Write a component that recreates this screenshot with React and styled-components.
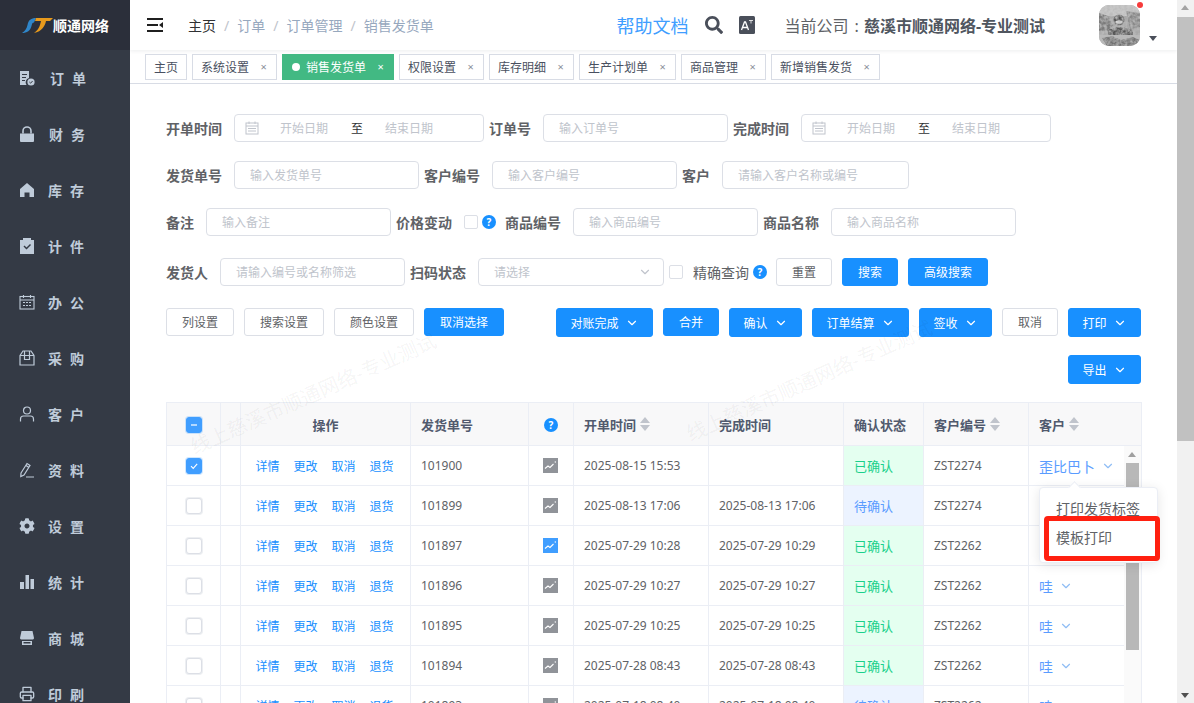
import React from "react";
import styled, { createGlobalStyle } from "styled-components";
import { FaCog, FaSearch } from "react-icons/fa";
import { FiPrinter, FiChevronDown } from "react-icons/fi";

const GlobalStyle = createGlobalStyle`
  html, body { margin: 0; padding: 0; height: 100%; overflow: hidden; }
  body { font-family: "Noto Sans", "Noto Sans CJK SC", sans-serif; color: #606266; background: #fff; }
  * { box-sizing: border-box; }
`;

const Page = styled.div`
  display: grid;
  grid-template-columns: 130px 1047px 17px;
  width: 1194px;
  height: 703px;
  overflow: hidden;
`;

// sidebar
const Sidebar = styled.aside`
  background: #343a45;
  height: 703px;
  overflow: hidden;
`;
const Logo = styled.div`
  display: flex;
  align-items: center;
  height: 50px;
  padding-left: 22px;
  background: #2b2f3a;
  color: #fff;
  font-size: 14px;
  font-weight: 700;
`;
const MenuItem = styled.div`
  display: flex;
  align-items: center;
  height: 56px;
  padding-left: 19px;
  color: #bfcbd9;
  font-size: 14px;
  font-weight: 700;
  svg { width: 16px; height: 16px; flex: none; }
`;
const MenuText = styled.span`
  margin-left: ${(p) => p.$offset || 13}px;
  letter-spacing: 8px;
`;

// page scrollbar
const PageScroll = styled.div`
  position: relative;
  background: #f1f1f1;
  height: 703px;
`;
const PageThumb = styled.div`
  position: absolute;
  top: 17px;
  left: 0;
  width: 17px;
  height: 424px;
  background: #c1c1c1;
`;
const Arrow = styled.i`
  position: absolute;
  left: 4px;
  ${(p) => (p.$down ? "bottom: 5px;" : "top: 5px;")}
  border-left: 4.5px solid transparent;
  border-right: 4.5px solid transparent;
  ${(p) => (p.$down ? `border-top: 5px solid ${p.$color};` : `border-bottom: 5px solid ${p.$color};`)}
`;

// main
const Main = styled.main`
  display: flex;
  flex-direction: column;
  height: 703px;
  overflow: hidden;
  position: relative;
`;
const Header = styled.header`
  display: flex;
  align-items: center;
  height: 50px;
  flex: none;
  padding: 0 20px 0 17px;
  box-shadow: 0 1px 4px rgba(0, 21, 41, 0.08);
`;
const Burger = styled.div`
  display: flex;
  width: 16px;
  margin-right: 25px;
`;
const Crumb = styled.span`
  font-size: 14px;
  color: ${(p) => (p.$home ? "#303133" : "#97a8be")};
`;
const CrumbSep = styled.span`
  font-size: 14px;
  margin: 0 8px;
  color: #c0c4cc;
`;
const HelpLink = styled.span`
  margin-left: auto;
  font-size: 18px;
  color: #409eff;
`;
const ToolIcon = styled.span`
  display: flex;
  margin-left: ${(p) => p.$ml}px;
  color: #4a4f5a;
`;
const Company = styled.span`
  margin-left: 30px;
  font-size: 16px;
  color: #606266;
  i { font-style: normal; margin: 0 5px 0 6px; }
  b { color: #50565f; font-weight: 700; }
`;
const Avatar = styled.div`
  position: relative;
  margin-left: 54px;
  width: 41px;
  height: 41px;
  svg { border-radius: 10px; display: block; }
`;
const RedDot = styled.i`
  position: absolute;
  top: -3px;
  right: -3px;
  width: 6px;
  height: 6px;
  border-radius: 50%;
  background: #f63b3b;
`;
const Caret = styled.i`
  margin: 26px 0 0 9px;
  border-left: 4px solid transparent;
  border-right: 4px solid transparent;
  border-top: 5px solid #4a4f5a;
`;

const TagBar = styled.div`
  display: flex;
  gap: 5px;
  flex: none;
  align-items: center;
  height: 34px;
  padding-left: 15px;
  border-bottom: 1px solid #d8dce5;
`;
const Tag = styled.div`
  display: flex;
  align-items: center;
  height: 26px;
  padding: 0 8px;
  font-size: 12px;
  border: 1px solid ${(p) => (p.$active ? "#42b983" : "#d8dce5")};
  background: ${(p) => (p.$active ? "#42b983" : "#fff")};
  color: ${(p) => (p.$active ? "#fff" : "#495060")};
  em { font-style: normal; font-size: 11px; margin-left: 10px; width: 9px; text-align: center; color: ${(p) => (p.$active ? "#fff" : "#8a8f99")}; }
`;
const TagDot = styled.i`
  width: 8px;
  height: 8px;
  border-radius: 50%;
  background: #fff;
  margin: 0 6px 0 1px;
`;

const Content = styled.div`
  position: relative;
  padding: 30px 36px 0;
`;
const FormRow = styled.div`
  display: flex;
  align-items: center;
  height: 28px;
  margin-bottom: ${(p) => p.$mb || 19}px;
`;
const Label = styled.label`
  font-size: 14px;
  font-weight: 700;
  color: #606266;
  margin-right: 12px;
  white-space: nowrap;
`;
const Field = styled.input`
  width: ${(p) => p.$w}px;
  height: 28px;
  margin-right: 5px;
  padding: 0 15px;
  font: inherit;
  font-size: 12px;
  border: 1px solid #dcdfe6;
  border-radius: 4px;
  outline: none;
  background: #fff;
  &::placeholder { color: #c0c4cc; opacity: 1; }
`;
const DateRange = styled.div`
  display: flex;
  align-items: center;
  width: 250px;
  height: 28px;
  margin-right: 5px;
  padding-left: 10px;
  font-size: 12px;
  color: #c0c4cc;
  border: 1px solid #dcdfe6;
  border-radius: 4px;
  svg { flex: none; }
  span { width: 72px; text-align: center; margin-left: 9px; }
  b { font-weight: 400; color: #303133; margin-left: 11px; width: 14px; }
`;
const EndDate = styled.span`
  && { margin-left: 8px; }
`;
const SelectBox = styled.div`
  display: flex;
  align-items: center;
  justify-content: space-between;
  width: 186px;
  height: 28px;
  padding: 0 11px 0 15px;
  font-size: 12px;
  color: #c0c4cc;
  border: 1px solid #dcdfe6;
  border-radius: 4px;
`;
const Check = styled.span`
  display: inline-flex;
  flex: none;
  align-items: center;
  justify-content: center;
  width: 14px;
  height: 14px;
  margin-left: ${(p) => p.$ml || 0}px;
  border: 1px solid #dcdfe6;
  border-radius: 2px;
  background: #fff;
`;
const Help = styled.span`
  display: inline-flex;
  flex: none;
  align-items: center;
  justify-content: center;
  width: 14px;
  height: 14px;
  margin: ${(p) => p.$m || "0"};
  border-radius: 50%;
  background: #1890ff;
  color: #fff;
  font-size: 10px;
  font-weight: 700;
  line-height: 1;
`;
const Exact = styled.span`
  margin-left: 10px;
  font-size: 14px;
  color: #606266;
`;
const Btn = styled.button`
  display: inline-flex;
  align-items: center;
  justify-content: center;
  gap: 6px;
  flex: none;
  width: ${(p) => p.$w}px;
  height: ${(p) => (p.$menu ? 29 : 28)}px;
  margin-left: ${(p) => p.$ml || 0}px;
  padding: 0;
  font: inherit;
  font-size: 12px;
  border-radius: 3px;
  border: 1px solid ${(p) => (p.$primary ? "#1890ff" : "#dcdfe6")};
  background: ${(p) => (p.$primary ? "#1890ff" : "#fff")};
  color: ${(p) => (p.$primary ? "#fff" : "#606266")};
`;
const ActionBar = styled.div`
  display: flex;
  justify-content: space-between;
  align-items: flex-start;
  margin-bottom: 18px;
`;
const ButtonGroup = styled.div`
  display: flex;
  gap: 10px;
`;
const RightButtons = styled.div`
  display: flex;
  flex-wrap: wrap;
  justify-content: flex-end;
  gap: 18px 10px;
  width: 585px;
`;

// table
const TableWrap = styled.div`
  position: relative;
`;
const Table = styled.table`
  width: 975px;
  table-layout: fixed;
  border-collapse: collapse;
  font-size: 12px;
  color: #606266;
  th, td { border: 1px solid #ebeef5; padding: 0 10px; white-space: nowrap; }
  th { height: 43px; background: #f8f8f9; font-size: 13px; font-weight: 700; text-align: left; color: #515a6e; }
  td { height: 40px; background: #fff; }
`;
const CenterCell = styled.td`
  && { text-align: center; padding: 0; }
`;
const CenterHead = styled.th`
  && { text-align: center; padding: 0; }
`;
const StatusCell = styled.td`
  && {
    background: ${(p) => (p.$pending ? "#ecf3ff" : "#e4fff0")};
    color: ${(p) => (p.$pending ? "#5a9cff" : "#19d08b")};
    font-size: 13px;
  }
`;
const TickBox = styled.span`
  display: inline-flex;
  align-items: center;
  justify-content: center;
  vertical-align: middle;
  width: 16px;
  height: 16px;
  border-radius: 3px;
  border: 1px solid ${(p) => (p.$on ? "#409eff" : "#dcdfe6")};
  background: ${(p) => (p.$on ? "#409eff" : "#fff")};
  box-shadow: 0 0 0 1px ${(p) => (p.$on ? "rgba(64,158,255,.25)" : "rgba(220,223,230,.5)")};
`;
const Ops = styled.div`
  display: flex;
  justify-content: center;
  gap: 14px;
  padding-right: 2px;
  color: #1890ff;
`;
const ChartBox = styled.span`
  display: inline-flex;
  vertical-align: middle;
  margin: -2px 2px 0 0;
  background: ${(p) => (p.$on ? "#409eff" : "#909399")};
`;
const SortHead = styled.span`
  display: inline-flex;
  align-items: center;
  gap: 4px;
`;
const Sort = styled.span`
  display: inline-flex;
  flex-direction: column;
  gap: 2px;
  &::before, &::after { content: ""; border-left: 5px solid transparent; border-right: 5px solid transparent; }
  &::before { border-bottom: 6px solid #c0c4cc; }
  &::after { border-top: 6px solid #c0c4cc; }
`;
const Customer = styled.span`
  display: inline-flex;
  align-items: center;
  gap: 6px;
  font-size: 14px;
  color: #5a9cff;
`;
const InnerScroll = styled.div`
  position: absolute;
  top: 44px;
  right: 0;
  width: 17px;
  height: 300px;
  background: #fafafa;
`;
const InnerThumb = styled.div`
  position: absolute;
  top: 17px;
  left: 2px;
  width: 13px;
  height: 187px;
  background: #b8b8b8;
`;
const InnerArrow = styled.i`
  position: absolute;
  top: 6px;
  left: 4px;
  border-left: 4.5px solid transparent;
  border-right: 4.5px solid transparent;
  border-bottom: 5px solid #a0a0a0;
`;
const Dropdown = styled.div`
  position: absolute;
  top: 85px;
  left: 873px;
  width: 119px;
  height: 76px;
  padding-top: 11px;
  background: #fff;
  border: 1px solid #ebeef5;
  border-radius: 4px;
  box-shadow: 0 2px 12px rgba(0, 0, 0, 0.1);
  font-size: 14px;
  &::before {
    content: "";
    position: absolute;
    top: -5px;
    left: 30px;
    width: 8px;
    height: 8px;
    background: #fff;
    border-left: 1px solid #ebeef5;
    border-top: 1px solid #ebeef5;
    transform: rotate(45deg);
  }
`;
const DropItem = styled.div`
  height: 29px;
  line-height: 20px;
  padding-left: 16px;
  white-space: nowrap;
`;
const Highlight = styled.div`
  position: absolute;
  top: 114px;
  left: 878px;
  width: 116px;
  height: 45px;
  border: 5px solid #ff2010;
  border-radius: 4px;
`;
const Watermark = styled.div`
  position: absolute;
  left: ${(p) => p.$x}px;
  top: ${(p) => p.$y}px;
  font-size: 20px;
  color: rgba(0, 0, 0, 0.055);
  white-space: nowrap;
  transform: rotate(-24deg);
  transform-origin: left bottom;
  pointer-events: none;
  z-index: 3;
`;

const menu = [
  ["订单", "doc", 15], ["财务", "lock", 14], ["库存", "home", 13], ["计件", "clip", 13],
  ["办公", "cal", 13], ["采购", "box", 13], ["客户", "user", 13], ["资料", "pen", 13],
  ["设置", "gear", 13], ["统计", "bars", 13], ["商城", "shop", 13], ["印刷", "print", 13],
];

const DrawnIcon = ({ kind }) => {
  if (kind === "gear") return <FaCog />;
  if (kind === "print") return <FiPrinter />;
  if (kind === "doc")
    return (
      <svg viewBox="0 0 16 16" fill="#bfcbd9">
        <path d="M1 1h9v7a4.500 4.500 0 0 0-2.500 7H1zM3 4v1h5V4zm0 3v1h4V7zm0 3v1h3v-1z" fillRule="evenodd" />
        <circle cx="12" cy="12" r="3.600" />
        <path d="M10.400 12l1.200 1.200 2-2.200" stroke="#343a45" strokeWidth="1" fill="none" />
      </svg>
    );
  if (kind === "lock")
    return (
      <svg viewBox="0 0 16 16" fill="#bfcbd9">
        <path d="M1 7.500h14V15a1 1 0 0 1-1 1H2a1 1 0 0 1-1-1z" />
        <path d="M4 7.500V5a4 4 0 0 1 8 0v2.500" fill="none" stroke="#bfcbd9" strokeWidth="1.600" />
      </svg>
    );
  if (kind === "home")
    return (
      <svg viewBox="0 0 16 16" fill="#bfcbd9">
        <path d="M8 1 15 7v8h-4.500v-4.500h-5V15H1V7z" />
      </svg>
    );
  if (kind === "clip")
    return (
      <svg viewBox="0 0 16 16" fill="#bfcbd9">
        <path fillRule="evenodd" d="M1 2h3V0h8v2h3v14H1zM4.500 8.500l1-1 2 2L11 6l1 1-4.500 4.500z" />
      </svg>
    );
  if (kind === "cal")
    return (
      <svg viewBox="0 0 16 16" fill="none" stroke="#bfcbd9" strokeWidth="1.100">
        <rect x="1" y="2.500" width="14" height="12.500" />
        <path d="M1 6h14M4.500 1v3M11.500 1v3M4 8.500h2M7 8.500h2M10 8.500h2M4 11.500h2M7 11.500h2M10 11.500h2" />
      </svg>
    );
  if (kind === "box")
    return (
      <svg viewBox="0 0 16 16" fill="none" stroke="#bfcbd9" strokeWidth="1.200">
        <path d="M1 5.500 4 1h8l3 4.500V15H1zM1 5.500h14M5.500 1v8.500h5V1" />
      </svg>
    );
  if (kind === "user")
    return (
      <svg viewBox="0 0 16 16" fill="none" stroke="#bfcbd9" strokeWidth="1.200">
        <circle cx="8" cy="4.500" r="3.500" />
        <path d="M1.500 15.500V13c0-2 1.500-3 3-3h7c1.500 0 3 1 3 3v2.500" />
      </svg>
    );
  if (kind === "pen")
    return (
      <svg viewBox="0 0 16 16" fill="none" stroke="#bfcbd9" strokeWidth="1.200">
        <path d="M2 11 8 1.500l3 2L5 13l-3.200 1.500zM7 15h8M7 3.500l3 2" />
      </svg>
    );
  if (kind === "bars")
    return (
      <svg viewBox="0 0 16 16" fill="#bfcbd9">
        <path d="M1 8h4v7H1zM6.500 1h3.500v14H6.500zM11.500 5H15v10h-3.500z" />
      </svg>
    );
  return (
    <svg viewBox="0 0 16 16" fill="#bfcbd9">
      <path d="M2.500 1h11l1.500 7c0 1-1 1.500-2 1.500H3C2 9.500 1 9 1 8zM3 11h10v4H3zm1.500 1v1.500h7V12z" fillRule="evenodd" />
    </svg>
  );
};

const SelectedMark = () => (
  <svg width="10" height="10" viewBox="0 0 10 10" fill="none" stroke="#fff" strokeWidth="1.100">
    <path d="M2 5.200 4.200 7.400 8.200 2.800" />
  </svg>
);

const ChartIcon = ({ on }) => (
  <ChartBox $on={on}>
    <svg width="15" height="15" viewBox="0 0 15 15" fill="none" stroke="#fff" strokeWidth="1.100">
      <path d="M2 10.500 5 8l2 1.500 3.500-3.500" />
      <circle cx="12.300" cy="4" r="0.700" fill="#fff" stroke="none" />
    </svg>
  </ChartBox>
);

const CalendarGlyph = () => (
  <svg width="14" height="14" viewBox="0 0 14 14" fill="none" stroke="#c0c4cc" strokeWidth="1">
    <rect x="1" y="2" width="12" height="11" />
    <path d="M1 5h12M4 0.500v2.500M10 0.500v2.500M3 7.500h8M3 10h8" />
  </svg>
);

const Down = ({ size = 14, color = "#fff" }) => <FiChevronDown size={size} color={color} />;

const AvatarPhoto = () => (
  <svg width="41" height="41" viewBox="0 0 41 41">
    <defs>
      <filter id="grain" x="0" y="0" width="100%" height="100%">
        <feTurbulence type="fractalNoise" baseFrequency="0.35" numOctaves="2" seed="4" />
        <feColorMatrix values="0 0 0 0 0.5  0 0 0 0 0.5  0 0 0 0 0.5  1.800 0 0 0 -0.500" />
      </filter>
    </defs>
    <rect width="41" height="41" fill="#a8a8a8" />
    <rect width="41" height="11" fill="#c9c9c9" />
    <path d="M0 8l9 3 5 9-4 6H0z" fill="#7a7a7a" />
    <path d="M27 6l14 2v14l-10 2z" fill="#868686" />
    <circle cx="20" cy="15" r="5.500" fill="#505050" />
    <ellipse cx="20" cy="17" rx="3.500" ry="1.800" fill="#d8d8d8" />
    <path d="M9 26c5-5 18-5 25 0v4H9z" fill="#565656" />
    <path d="M0 30h41v11H0z" fill="#b8b8b8" />
    <path d="M3 33l10-2 9 4 12-3 7 3v3l-10 3H8z" fill="#727272" />
    <rect width="41" height="41" filter="url(#grain)" />
  </svg>
);

const tags = [
  ["主页", false, false], ["系统设置", true, false], ["销售发货单", true, true], ["权限设置", true, false],
  ["库存明细", true, false], ["生产计划单", true, false], ["商品管理", true, false], ["新增销售发货", true, false],
];

const rows = [
  { id: "101900", start: "2025-08-15 15:53", end: "", pending: false, code: "ZST2274", name: "歪比巴卜", checked: true },
  { id: "101899", start: "2025-08-13 17:06", end: "2025-08-13 17:06", pending: true, code: "ZST2274", name: "" },
  { id: "101897", start: "2025-07-29 10:28", end: "2025-07-29 10:29", pending: false, code: "ZST2262", name: "", chart: true },
  { id: "101896", start: "2025-07-29 10:27", end: "2025-07-29 10:27", pending: false, code: "ZST2262", name: "哇" },
  { id: "101895", start: "2025-07-29 10:25", end: "2025-07-29 10:25", pending: false, code: "ZST2262", name: "哇" },
  { id: "101894", start: "2025-07-28 08:43", end: "2025-07-28 08:43", pending: false, code: "ZST2262", name: "哇" },
  { id: "101893", start: "2025-07-18 08:40", end: "2025-07-18 08:40", pending: true, code: "ZST2262", name: "哇" },
];

const columns = [54, 20, 170, 118, 45, 135, 135, 80, 105, 113];

export default function App() {
  return (
    <Page>
      <GlobalStyle />
      <Sidebar>
        <Logo>
          <svg width="31" height="16" viewBox="0 0 31 16">
            <path d="M0 16C3 14 4.500 12 5.500 8 6.500 3 9 1 14 1L12 5.500C10.500 5.500 10 6.500 9.500 9 8.500 13.500 5 16 0 16Z" fill="#2f86c9" />
            <path d="M14 1H31L28 4H24C23 9 20 14.500 12 16 16.500 13 18 9 19 4H13Z" fill="#e89a1c" />
          </svg>
          顺通网络
        </Logo>
        {menu.map(([text, kind, offset]) => (
          <MenuItem key={text}>
            <DrawnIcon kind={kind} />
            <MenuText $offset={offset}>{text}</MenuText>
          </MenuItem>
        ))}
      </Sidebar>

      <Main>
        <Header>
          <Burger>
            <svg width="16" height="14" viewBox="0 0 16 14" fill="#1f1f1f">
              <path d="M0 0h16v2H0zM0 6h11v2H0zM0 12h16v2H0zM16 4v6l-4-3z" />
            </svg>
          </Burger>
          <Crumb $home>主页</Crumb>
          <CrumbSep>/</CrumbSep>
          <Crumb>订单</Crumb>
          <CrumbSep>/</CrumbSep>
          <Crumb>订单管理</Crumb>
          <CrumbSep>/</CrumbSep>
          <Crumb>销售发货单</Crumb>
          <HelpLink>帮助文档</HelpLink>
          <ToolIcon $ml={16}><FaSearch size={18} /></ToolIcon>
          <ToolIcon $ml={16}>
            <svg width="16" height="18" viewBox="0 0 16 18">
              <rect width="16" height="18" rx="1.500" fill="#4a4f5a" />
              <path d="M2.500 14 5.500 6h1l3 8M3.800 11.500h4.400" stroke="#fff" strokeWidth="1.300" fill="none" />
              <path d="M10 4.500h4M12 4.500v3" stroke="#fff" strokeWidth="0.800" fill="none" />
            </svg>
          </ToolIcon>
          <Company>当前公司<i>:</i><b>慈溪市顺通网络-专业测试</b></Company>
          <Avatar>
            <AvatarPhoto />
            <RedDot />
          </Avatar>
          <Caret />
        </Header>

        <TagBar>
          {tags.map(([text, closable, active]) => (
            <Tag key={text} $active={active}>
              {active && <TagDot />}
              {text}
              {closable && <em>×</em>}
            </Tag>
          ))}
        </TagBar>

        <Content>
          <FormRow>
            <Label>开单时间</Label>
            <DateRange>
              <CalendarGlyph />
              <span>开始日期</span>
              <b>至</b>
              <EndDate>结束日期</EndDate>
            </DateRange>
            <Label>订单号</Label>
            <Field $w={185} placeholder="输入订单号" />
            <Label>完成时间</Label>
            <DateRange>
              <CalendarGlyph />
              <span>开始日期</span>
              <b>至</b>
              <EndDate>结束日期</EndDate>
            </DateRange>
          </FormRow>
          <FormRow>
            <Label>发货单号</Label>
            <Field $w={185} placeholder="输入发货单号" />
            <Label>客户编号</Label>
            <Field $w={185} placeholder="输入客户编号" />
            <Label>客户</Label>
            <Field $w={187} placeholder="请输入客户名称或编号" />
          </FormRow>
          <FormRow $mb={22}>
            <Label>备注</Label>
            <Field $w={185} placeholder="输入备注" />
            <Label>价格变动</Label>
            <Check />
            <Help $m="0 9px 0 4px">?</Help>
            <Label>商品编号</Label>
            <Field $w={185} placeholder="输入商品编号" />
            <Label>商品名称</Label>
            <Field $w={185} placeholder="输入商品名称" />
          </FormRow>
          <FormRow $mb={22}>
            <Label>发货人</Label>
            <Field $w={185} placeholder="请输入编号或名称筛选" />
            <Label>扫码状态</Label>
            <SelectBox>请选择<Down size={14} color="#c0c4cc" /></SelectBox>
            <Check $ml={5} />
            <Exact>精确查询</Exact>
            <Help $m="0 0 0 4px">?</Help>
            <Btn $w={56} $ml={9}>重置</Btn>
            <Btn $w={56} $ml={10} $primary>搜索</Btn>
            <Btn $w={80} $ml={10} $primary>高级搜索</Btn>
          </FormRow>
          <ActionBar>
            <ButtonGroup>
              <Btn $w={68}>列设置</Btn>
              <Btn $w={80}>搜索设置</Btn>
              <Btn $w={80}>颜色设置</Btn>
              <Btn $w={80} $primary>取消选择</Btn>
            </ButtonGroup>
            <RightButtons>
              <Btn $w={97} $menu $primary>对账完成<Down /></Btn>
              <Btn $w={56} $primary>合并</Btn>
              <Btn $w={73} $menu $primary>确认<Down /></Btn>
              <Btn $w={97} $menu $primary>订单结算<Down /></Btn>
              <Btn $w={73} $menu $primary>签收<Down /></Btn>
              <Btn $w={56}>取消</Btn>
              <Btn $w={73} $menu $primary>打印<Down /></Btn>
              <Btn $w={73} $menu $primary>导出<Down /></Btn>
            </RightButtons>
          </ActionBar>

          <TableWrap>
            <Table>
              <colgroup>
                {columns.map((w, i) => <col key={i} width={w} />)}
              </colgroup>
              <thead>
                <tr>
                  <CenterHead>
                    <TickBox $on>
                      <svg width="10" height="10" viewBox="0 0 10 10"><path d="M2 5h6" stroke="#fff" strokeWidth="1.200" /></svg>
                    </TickBox>
                  </CenterHead>
                  <th />
                  <CenterHead>操作</CenterHead>
                  <th>发货单号</th>
                  <CenterHead><Help>?</Help></CenterHead>
                  <th><SortHead>开单时间<Sort /></SortHead></th>
                  <th>完成时间</th>
                  <th>确认状态</th>
                  <th><SortHead>客户编号<Sort /></SortHead></th>
                  <th><SortHead>客户<Sort /></SortHead></th>
                </tr>
              </thead>
              <tbody>
                {rows.map((r) => (
                  <tr key={r.id}>
                    <CenterCell>
                      <TickBox $on={r.checked}>{r.checked && <SelectedMark />}</TickBox>
                    </CenterCell>
                    <td />
                    <td>
                      <Ops><span>详情</span><span>更改</span><span>取消</span><span>退货</span></Ops>
                    </td>
                    <td>{r.id}</td>
                    <CenterCell><ChartIcon on={r.chart} /></CenterCell>
                    <td>{r.start}</td>
                    <td>{r.end}</td>
                    <StatusCell $pending={r.pending}>{r.pending ? "待确认" : "已确认"}</StatusCell>
                    <td>{r.code}</td>
                    <td>
                      {r.name && <Customer>{r.name}<Down color="#8fbdf5" /></Customer>}
                    </td>
                  </tr>
                ))}
              </tbody>
            </Table>
            <InnerScroll>
              <InnerArrow />
              <InnerThumb />
            </InnerScroll>
            <Dropdown>
              <DropItem>打印发货标签</DropItem>
              <DropItem>模板打印</DropItem>
            </Dropdown>
            <Highlight />
          </TableWrap>

          <Watermark $x={67} $y={347}>线上慈溪市顺通网络-专业测试</Watermark>
          <Watermark $x={563} $y={334}>线上慈溪市顺通网络-专业测试</Watermark>
        </Content>
      </Main>

      <PageScroll>
        <Arrow $color="#a3a3a3" />
        <PageThumb />
        <Arrow $down $color="#505050" />
      </PageScroll>
    </Page>
  );
}
